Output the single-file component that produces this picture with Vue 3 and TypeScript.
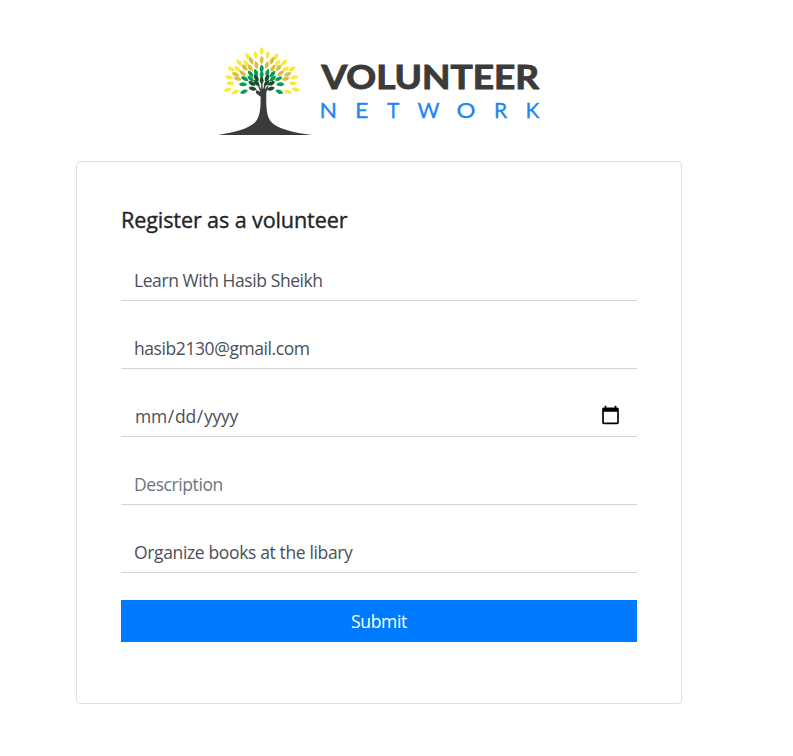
<script setup lang="ts">
import { ref } from 'vue'

interface Leaf {
  x: number
  y: number
  angle: number
  fill: string
}

const yellow = '#f8ea38'
const gold = '#d8c03e'
const green = '#0c9a50'
const dark = '#1c4a30'

// Left half of the crown; leaves off the centre line are mirrored at x = 155.
const half: [number, number, number, string][] = [
  [155, 33, 90, yellow], [137, 45, 80, yellow], [113, 50, 62, yellow],
  [108, 70, 50, yellow], [88, 68, 45, yellow], [83, 87, 36, yellow],
  [64, 87, 30, yellow], [57, 112, 10, yellow], [61, 130, -3, yellow],
  [53, 149, -12, yellow], [76, 156, -20, yellow],
  [155, 60, 90, gold], [124, 62, 66, gold], [139, 75, 76, gold],
  [104, 83, 48, gold], [121, 84, 56, gold], [77, 103, 24, gold],
  [98, 100, 36, gold], [83, 116, 14, gold],
  [155, 86, 90, green], [138, 98, 72, green], [122, 102, 50, green],
  [104, 116, 26, green], [99, 133, 2, green], [102, 155, -22, green],
  [155, 104, 90, green], [122, 116, 38, green],
  [155, 121, 90, dark], [139, 114, 62, dark], [126, 130, 26, dark],
  [140, 129, 48, dark], [128, 146, 12, dark],
]

const leaves: Leaf[] = half.flatMap(([x, y, angle, fill]) => {
  const leaf = { x, y, angle, fill }
  return x === 155 ? [leaf] : [leaf, { x: 310 - x, y, angle: 180 - angle, fill }]
})

const name = ref('Learn With Hasib Sheikh')
const email = ref('hasib2130@gmail.com')
const date = ref('')
const description = ref('')
const task = ref('Organize books at the libary')
</script>

<template>
  <main class="page">
    <svg class="logo" viewBox="0 0 330 100" role="img" aria-label="Volunteer Network">
      <g transform="scale(0.33333)">
        <path
          v-for="(leaf, i) in leaves"
          :key="i"
          d="M-12.5 0Q-7 -6.5 1 -6Q8 -5 12.5 0Q7 6.5 -1 6Q-8 5 -12.5 0Z"
          :fill="leaf.fill"
          :transform="`translate(${leaf.x} ${leaf.y}) rotate(${leaf.angle})`"
        />
        <path
          d="M25 285C75 276 112 267 133 249C149 234 152 211 152 170L140 161Q135 154 140 151L151 155L143 136L146 134L154 149L153 132H157L159 148L164 133L167 134L165 149L172 137L175 139L169 157C168 208 170 232 186 248C207 267 248 277 306 285Z"
          fill="#3b3b3b"
        />
      </g>
      <text class="brand" x="111.5" y="48.5" textLength="217.5" lengthAdjust="spacingAndGlyphs">VOLUNTEER</text>
      <g class="network">
        <text x="109.5" y="78" textLength="17.5" lengthAdjust="spacingAndGlyphs">N</text>
        <text x="145" y="78" textLength="13.5" lengthAdjust="spacingAndGlyphs">E</text>
        <text x="177" y="78">T</text>
        <text x="207.5" y="78" textLength="22" lengthAdjust="spacingAndGlyphs">W</text>
        <text x="246.5" y="78" textLength="19" lengthAdjust="spacingAndGlyphs">O</text>
        <text x="284" y="78">R</text>
        <text x="315.5" y="78">K</text>
      </g>
    </svg>

    <form class="card" @submit.prevent>
      <h1 class="title">Register as a volunteer</h1>
      <input v-model="name" class="field name" type="text" />
      <input v-model="email" class="field email" type="text" />
      <input v-model="date" class="field date" type="date" />
      <input v-model="description" class="field description" type="text" placeholder="Description" />
      <input v-model="task" class="field task" type="text" />
      <button class="submit" type="submit">Submit</button>
    </form>
  </main>
</template>

<style>
body {
  background: #fff;
}
</style>

<style scoped>
.page {
  box-sizing: border-box;
  width: 758px;
  padding-top: 40px;
  display: flex;
  flex-direction: column;
  align-items: center;
  font-family: "Open Sans", "Noto Sans", sans-serif;
}
.logo {
  display: block;
  width: 330px;
  height: 100px;
  margin-right: 8px;
  overflow: visible;
}
.brand {
  font: 700 33px Lato, sans-serif;
  fill: #3b3b3b;
  stroke: #3b3b3b;
  stroke-width: 1px;
}
.network {
  font: 400 21px Lato, sans-serif;
  fill: #2385f5;
  stroke: #2385f5;
  stroke-width: 0.3px;
}
.card {
  box-sizing: border-box;
  width: 606px;
  height: 543px;
  margin-top: 21px;
  padding: 44px;
  border: 1px solid #dfdfdf;
  border-radius: 4px;
  display: flex;
  flex-direction: column;
}
.title {
  margin: 0 0 26px;
  font-size: 21.6px;
  line-height: 27px;
  font-weight: 500;
  letter-spacing: -0.12px;
  -webkit-text-stroke: 0.35px #212529;
  color: #212529;
  white-space: nowrap;
}
.field {
  box-sizing: border-box;
  width: 100%;
  height: 42px;
  margin: 0 0 26px;
  padding: 6px 13px;
  border: 0;
  border-bottom: 1px solid #ced4da;
  border-radius: 0;
  outline: 0;
  background: #fff;
  font-family: inherit;
  font-size: 17.5px;
  letter-spacing: -0.42px;
  color: #495057;
}
.date {
  padding-right: 14px;
  letter-spacing: -0.28px;
}
.date::-webkit-calendar-picker-indicator {
  width: 21px;
  height: 21px;
  padding: 0 2px;
}
.task {
  letter-spacing: -0.36px;
}
.field::placeholder {
  color: #6c757d;
  opacity: 1;
}
.submit {
  height: 42px;
  margin: 1px 0 0;
  padding: 0;
  border: 0;
  background: #007bff;
  color: #fff;
  font-family: inherit;
  font-size: 17.5px;
  letter-spacing: -0.35px;
}
</style>
